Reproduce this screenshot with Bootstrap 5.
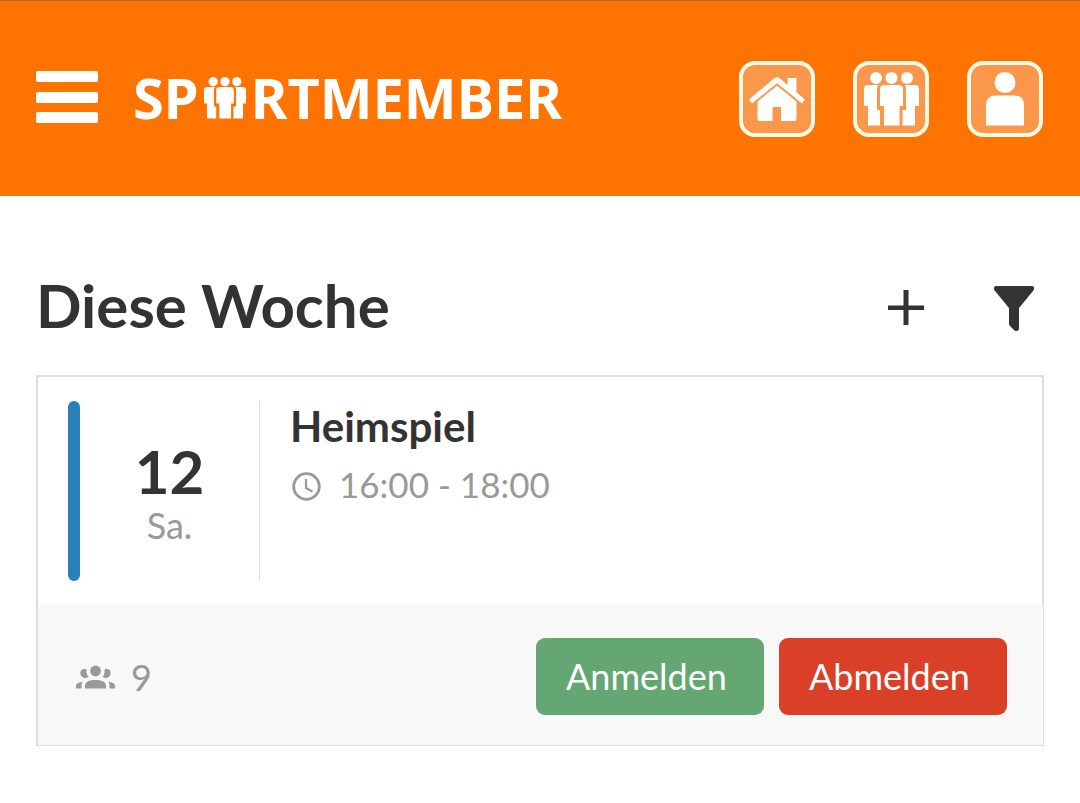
<!DOCTYPE html>
<html lang="de">
<head>
<meta charset="utf-8">
<meta name="viewport" content="width=device-width, initial-scale=1">
<title>SportMember</title>
<link href="https://cdn.jsdelivr.net/npm/bootstrap@5.3.0/dist/css/bootstrap.min.css" rel="stylesheet">
<style>
  body { font-family: Lato, "Liberation Sans", sans-serif; color: #333; background: #fff; }
  svg { display: block; fill: currentColor; }
  .topbar { background: #ff7300; border-top: 1px solid #b3642a; min-height: 196px; padding: 0 36px; color: #fff; }
  .burger { width: 64px; padding: 0 0 4px; }
  .brand { font: 700 56px/60px "Noto Sans", sans-serif; color: #fff; margin-left: 33px; padding-bottom: 4px; gap: 5px; }
  .brand svg { margin-top: 2px; }
  .tile { width: 76px; height: 76px; border: 4px solid #fffbe8; border-radius: 16px; background: #fb974b; color: #fff; }
  .tiles { gap: 38px; margin-right: 1px; }
  .page { padding: 72px 36px 0; }
  .week { font-size: 60px; line-height: 75px; font-weight: 700; }
  .heading { margin-bottom: 32px; }
  .tools { gap: 69px; padding: 5px 9px 0 0; }
  .tools .btn { color: #333; }
  .event { border: 2px solid #ddd; border-width: 2px 2px 0; padding: 24px 30px; }
  .stripe { width: 12px; border-radius: 6px; background: #2980b9; }
  .datebox { width: 180px; min-height: 180px; border-right: 1px solid #ddd; padding-top: 8px; }
  .day { font-size: 60px; line-height: 60px; font-weight: 700; }
  .soft { font-size: 36px; line-height: 48px; color: #999; }
  .info { padding-left: 30px; }
  .title { font-size: 42px; line-height: 50px; font-weight: 700; }
  .when { margin-top: 9px; font-size: 35px; }
  .when svg { margin: 4px 15px 0 0; }
  .strip { border: 1px solid #ddd; border-left-width: 2px; border-top: 0; background: #f8f8f8; padding: 33px 36px 30px 38px; }
  .act { font-size: 36px; line-height: 53px; padding: 12px 30px; border: 0; border-radius: 9px; min-width: 228px; color: #fff; text-align: left; }
  .yes { background: #64a772; }
  .no { background: #da4028; }
  .acts { gap: 15px; }
</style>
</head>
<body>
<svg class="d-none" aria-hidden="true">
  <symbol id="team" viewBox="0 0 55 54">
    <circle cx="12" cy="6" r="6"/><circle cx="43" cy="6" r="6"/><circle cx="27.500" cy="6" r="6"/>
    <path d="M4 13H14.500Q13 15 13 17V38H16V53.500H4V34H0V17Q0 13 4 13ZM51 13H41Q42 15 42 17V38H38.500V53.500H51V34H55V17Q55 13 51 13ZM20.500 13H34.500Q39 13 39 17V34H35.500V53.500H20V34H16V17Q16 13 20.500 13Z"/>
  </symbol>
</svg>
<header class="topbar d-flex align-items-center">
  <button type="button" class="btn border-0 text-white burger" aria-label="Menü">
    <svg width="64" height="54" viewBox="0 0 64 54"><rect x="0" y="1" width="62" height="11" rx="2"/><rect x="0" y="22" width="62" height="11" rx="2"/><rect x="0" y="42" width="62" height="11" rx="2"/></svg>
  </button>
  <a href="#" class="brand d-flex align-items-center text-decoration-none"><span>SP</span><svg width="42" height="42" viewBox="0 0 55 54" preserveAspectRatio="none"><use href="#team" width="55" height="54"/></svg><span>RTMEMBER</span></a>
  <nav class="tiles d-flex ms-auto" aria-label="Bereiche">
    <a href="#" class="tile d-flex align-items-center justify-content-center" aria-label="Start">
      <svg width="56" height="46" viewBox="0 0 56 46"><path d="M8.500 24 28 7.500 47.500 24V43Q47.500 45 45.500 45H32V31H23.500V45H10.500Q8.500 45 8.500 43Z"/><path d="M1 22.500 25 2.500Q28 0 31 2.500L38.500 9V2H47.500V16.500L55 22.500Q56 23.500 55 25L52.500 27.500 28 7.500 3.500 27.500 1 25Q0 23.500 1 22.500Z"/><path d="M4 28 28 8.500 52 28" fill="none" stroke="#fb974b" stroke-width="1.800"/></svg>
    </a>
    <a href="#" class="tile d-flex align-items-center justify-content-center" aria-label="Team">
      <svg width="55" height="54"><use href="#team"/></svg>
    </a>
    <a href="#" class="tile d-flex align-items-center justify-content-center" aria-label="Profil">
      <svg width="38" height="54" viewBox="0 0 38 54"><circle cx="19" cy="10.500" r="10.500"/><path d="M0 53.500V33Q0 23.500 9.500 23.500H28.500Q38 23.500 38 33V53.500Z"/></svg>
    </a>
  </nav>
</header>
<main class="page">
  <div class="heading d-flex align-items-center">
    <h1 class="week m-0">Diese Woche</h1>
    <div class="tools d-flex align-items-center ms-auto">
      <button type="button" class="btn p-0 border-0" aria-label="Hinzufügen"><svg width="36" height="36" viewBox="0 0 36 36"><path d="M15.500 0H20.500V15.500H36V20H20.500V35H15.500V20H0V15.500H15.500Z"/></svg></button>
      <button type="button" class="btn p-0 border-0" aria-label="Filtern"><svg width="42" height="46" viewBox="0 0 42 46"><path d="M3 1H39Q41.500 1 41 4Q41 5 40 6L26 23V43Q26 46 23.500 46Q22.500 46 21.500 45.500L17 41Q16 40 16 38.500V23L2 6Q1 5 1 4Q.5 1 3 1Z"/></svg></button>
    </div>
  </div>
  <article>
    <div class="event d-flex">
      <div class="stripe"></div>
      <div class="datebox d-flex flex-column align-items-center justify-content-center">
        <div class="day">12</div>
        <div class="soft">Sa.</div>
      </div>
      <div class="info">
        <h2 class="title m-0">Heimspiel</h2>
        <div class="soft when d-flex align-items-center">
          <svg width="34" height="30" viewBox="0 0 34 30"><circle cx="16.500" cy="15.500" r="12.800" fill="none" stroke="currentColor" stroke-width="2.800"/><path d="M16 8V17L22.500 20.500" fill="none" stroke="currentColor" stroke-width="2.200"/></svg>
          <span>16:00 - 18:00</span>
        </div>
      </div>
    </div>
    <div class="strip d-flex align-items-center">
      <div class="soft d-flex align-items-center">
        <svg class="me-3" width="39" height="24" viewBox="0 0 39 24"><circle cx="19.500" cy="6" r="5.400"/><path d="M9 23.500V20Q10 15 19.500 15T30 20V23.500ZM10.500 4.500C6 3 4 6 4.500 9C5 12.500 9 14 12.500 12Q10 9 10.500 4.500ZM28.500 4.500C33 3 35 6 34.500 9C34 12.500 30 14 26.500 12Q29 9 28.500 4.500ZM0 23.500V20.500Q1 17.500 6.500 16.800Q5.500 18.500 5.500 20V23.500ZM39 23.500V20.500Q38 17.500 32.500 16.800Q33.500 18.500 33.500 20V23.500Z"/></svg>
        <span>9</span>
      </div>
      <div class="acts d-flex ms-auto">
        <button type="button" class="btn act yes">Anmelden</button>
        <button type="button" class="btn act no">Abmelden</button>
      </div>
    </div>
  </article>
</main>
<script src="https://cdn.jsdelivr.net/npm/bootstrap@5.3.0/dist/js/bootstrap.bundle.min.js"></script>
</body>
</html>
